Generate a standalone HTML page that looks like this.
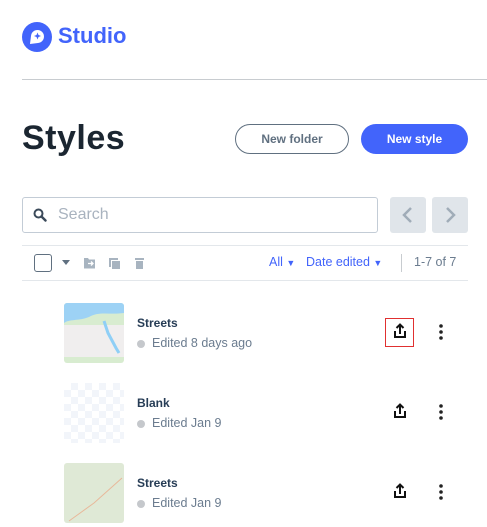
<!DOCTYPE html>
<html><head><style>
*{margin:0;padding:0;box-sizing:border-box}
body{width:487px;height:527px;overflow:hidden;background:#fff;font-family:"Liberation Sans",sans-serif;position:relative}
.a{position:absolute}
.t{font-weight:bold;font-size:12px;color:#273d56}
.s{font-size:12.5px;color:#6b7c8f}
.dot{width:8px;height:8px;border-radius:50%;background:#c5c8cc}
.th{width:60px;height:60px;border-radius:3px}
</style></head><body>
<svg class="a" style="left:22px;top:22px" width="30" height="30" viewBox="0 0 30 30"><circle cx="15" cy="15" r="15" fill="#4264fb"/><path d="M8 22 L9 14 A6.5 6.5 0 1 1 16 21 Z" fill="#fff"/><path d="M15.5 10.5 l1 2.5 2.5 1 -2.5 1 -1 2.5 -1 -2.5 -2.5 -1 2.5 -1z" fill="#4264fb"/></svg>
<div class="a" style="left:58px;top:23px;font-size:22px;font-weight:bold;color:#4264fb">Studio</div>
<div class="a" style="left:22px;top:79px;width:465px;height:1px;background:#c8ccd0"></div>
<div class="a" style="left:22px;top:119px;font-size:34px;font-weight:bold;color:#1b2631;letter-spacing:0.5px">Styles</div>
<div class="a" style="left:235px;top:124px;width:114px;height:30px;border:1px solid #607080;border-radius:15px;text-align:center;line-height:28px;font-size:12px;font-weight:bold;color:#607080">New folder</div>
<div class="a" style="left:361px;top:124px;width:107px;height:30px;background:#4264fb;border-radius:15px;text-align:center;line-height:30px;font-size:12px;font-weight:bold;color:#fff">New style</div>
<div class="a" style="left:22px;top:197px;width:356px;height:36px;border:1px solid #c3ccd6;border-radius:3px"></div>
<svg class="a" style="left:33px;top:208px" width="14" height="14" viewBox="0 0 14 14"><circle cx="5.5" cy="5.5" r="4" fill="none" stroke="#3b4a5a" stroke-width="2"/><path d="M8.5 8.5 L12.5 12.5" stroke="#3b4a5a" stroke-width="2.4" stroke-linecap="round"/></svg>
<div class="a" style="left:58px;top:206px;font-size:16px;color:#a9b3bf">Search</div>
<div class="a" style="left:390px;top:197px;width:36px;height:36px;background:#e0e5ea;border-radius:3px"></div>
<div class="a" style="left:432px;top:197px;width:36px;height:36px;background:#e0e5ea;border-radius:3px"></div>
<svg class="a" style="left:390px;top:197px" width="78" height="36"><path d="M21 11 L14 18 L21 25" fill="none" stroke="#a0acb8" stroke-width="2.5"/><path d="M57 11 L64 18 L57 25" fill="none" stroke="#a0acb8" stroke-width="2.5"/></svg>
<div class="a" style="left:22px;top:245px;width:446px;height:1px;background:#e3e7eb"></div>
<div class="a" style="left:34px;top:254px;width:18px;height:18px;border:1.5px solid #607080;border-radius:3px"></div>
<svg class="a" style="left:62px;top:256px" width="90" height="14"><path d="M0 4 h8 l-4 5z" fill="#607080"/><path d="M22 2 h4 l1 1.5 h6 v9 h-11z" fill="#a8b4c0"/><path d="M26 7.5h5 M29 5.5 l2 2 -2 2" stroke="#fff" stroke-width="1.3" fill="none"/><path d="M47 2 h9 v2 h-7 v7 h-2z" fill="#a8b4c0"/><rect x="50" y="5" width="8" height="8" fill="#a8b4c0"/><rect x="73" y="2" width="9" height="2" fill="#a8b4c0"/><rect x="74" y="5" width="7" height="8" fill="#a8b4c0"/></svg>
<div class="a" style="left:269px;top:255px;font-size:12.5px;color:#4264fb">All <span style="font-size:9px">▼</span></div>
<div class="a" style="left:306px;top:255px;font-size:12.5px;color:#4264fb">Date edited <span style="font-size:9px">▼</span></div>
<div class="a" style="left:401px;top:254px;width:1px;height:18px;background:#c8ccd0"></div>
<div class="a" style="left:414px;top:255px;font-size:12.5px;color:#6b7c8f">1-7 of 7</div>
<div class="a" style="left:22px;top:280px;width:446px;height:1px;background:#e3e7eb"></div>

<svg class="a" style="left:64px;top:303px;border-radius:3px" width="60" height="60"><rect width="60" height="60" fill="#d8ecd0"/><path d="M0 0 H60 V10 C45 12 35 8 25 14 C15 18 5 16 0 20Z" fill="#9dd2f5"/><rect x="0" y="22" width="60" height="32" fill="#f0eeee"/><path d="M40 18 L44 30 L52 45 L55 50" stroke="#8fcff6" stroke-width="3" fill="none"/></svg>
<div class="a th" style="left:64px;top:383px;background-color:#fff;background-image:linear-gradient(45deg,#f2f5fa 25%,transparent 25%,transparent 75%,#f2f5fa 75%),linear-gradient(45deg,#f2f5fa 25%,transparent 25%,transparent 75%,#f2f5fa 75%);background-size:14px 14px;background-position:0 0,7px 7px"></div>
<svg class="a" style="left:64px;top:463px;border-radius:3px" width="60" height="60"><rect width="60" height="60" fill="#dfe9d6"/><path d="M5 58 L30 40 L58 15" stroke="#e8b89a" stroke-width="1" fill="none"/></svg>

<div class="a t" style="left:137px;top:316px">Streets</div>
<div class="a dot" style="left:137px;top:340px"></div><div class="a s" style="left:152px;top:336px">Edited 8 days ago</div>
<div class="a t" style="left:137px;top:396px">Blank</div>
<div class="a dot" style="left:137px;top:420px"></div><div class="a s" style="left:152px;top:416px">Edited Jan 9</div>
<div class="a t" style="left:137px;top:476px">Streets</div>
<div class="a dot" style="left:137px;top:500px"></div><div class="a s" style="left:152px;top:496px">Edited Jan 9</div>

<div class="a" style="left:385px;top:318px;width:29px;height:29px;border:1px solid #e03030"></div>
<svg class="a" style="left:392px;top:322px" width="16" height="18" viewBox="0 0 16 18"><path d="M3 9 v6 h10 v-6" fill="none" stroke="#111" stroke-width="2"/><path d="M8 12 V3 M4.5 6 L8 2.5 L11.5 6" fill="none" stroke="#111" stroke-width="2"/></svg>
<svg class="a" style="left:392px;top:402px" width="16" height="18" viewBox="0 0 16 18"><path d="M3 9 v6 h10 v-6" fill="none" stroke="#111" stroke-width="2"/><path d="M8 12 V3 M4.5 6 L8 2.5 L11.5 6" fill="none" stroke="#111" stroke-width="2"/></svg>
<svg class="a" style="left:392px;top:482px" width="16" height="18" viewBox="0 0 16 18"><path d="M3 9 v6 h10 v-6" fill="none" stroke="#111" stroke-width="2"/><path d="M8 12 V3 M4.5 6 L8 2.5 L11.5 6" fill="none" stroke="#111" stroke-width="2"/></svg>
<svg class="a" style="left:437px;top:323px" width="8" height="180"><g fill="#222"><circle cx="4" cy="3" r="1.8"/><circle cx="4" cy="9" r="1.8"/><circle cx="4" cy="15" r="1.8"/><circle cx="4" cy="83" r="1.8"/><circle cx="4" cy="89" r="1.8"/><circle cx="4" cy="95" r="1.8"/><circle cx="4" cy="163" r="1.8"/><circle cx="4" cy="169" r="1.8"/><circle cx="4" cy="175" r="1.8"/></g></svg>
</body></html>
